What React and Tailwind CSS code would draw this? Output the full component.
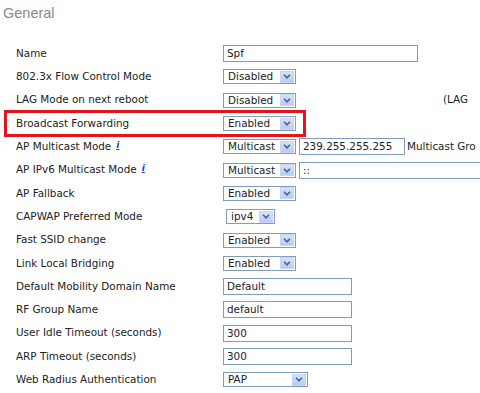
import React from "react";

function Arrow() {
  return (
    <span className="w-[14px] h-[12px] mr-[1px] shrink-0 flex items-center justify-center bg-[linear-gradient(#d6e2fc,#b8cbf6)] border border-[#c6d6fa]">
      <svg width="8" height="5" viewBox="0 0 8 5">
        <path d="M1 0.8 L4 3.8 L7 0.8" stroke="#4d6185" strokeWidth="1.6" fill="none" />
      </svg>
    </span>
  );
}

function Select({ value, className }) {
  return (
    <div className={"flex items-center h-[15px] border border-[#7f9db9] bg-white shrink-0 " + className}>
      <span className="pl-[4px] flex-1 leading-[13px] whitespace-nowrap">{value}</span>
      <Arrow />
    </div>
  );
}

function Input({ value, className }) {
  return (
    <div className={"flex items-center h-[17px] border border-[#7f9db9] bg-white shrink-0 " + className}>
      <span className="pl-[3px] leading-[13px] whitespace-nowrap">{value}</span>
    </div>
  );
}

function Info() {
  return (
    <span className="ml-[5px] inline-block text-[#1a33d6] font-bold italic underline text-[9px] leading-[10px] -translate-y-[2px]">i</span>
  );
}

export default function App() {
  const rows = [
    { label: "Name", ctrl: <Input value="Spf" className="w-[195px]" /> },
    { label: "802.3x Flow Control Mode", ctrl: <Select value="Disabled" className="w-[73px]" /> },
    {
      label: "LAG Mode on next reboot",
      ctrl: (
        <>
          <Select value="Disabled" className="w-[73px]" />
          <span className="ml-[147px] whitespace-nowrap">(LAG</span>
        </>
      ),
    },
    { label: "Broadcast Forwarding", ctrl: <Select value="Enabled" className="w-[73px]" />, hl: true },
    {
      label: "AP Multicast Mode",
      info: true,
      ctrl: (
        <>
          <Select value="Multicast" className="w-[73px]" />
          <Input value="239.255.255.255" className="w-[106px] ml-[3px]" />
          <span className="ml-[2px] whitespace-nowrap">Multicast Gro</span>
        </>
      ),
    },
    {
      label: "AP IPv6 Multicast Mode",
      info: true,
      ctrl: (
        <>
          <Select value="Multicast" className="w-[73px]" />
          <Input value="::" className="w-[260px] ml-[3px]" />
        </>
      ),
    },
    { label: "AP Fallback", ctrl: <Select value="Enabled" className="w-[73px]" /> },
    { label: "CAPWAP Preferred Mode", ctrl: <Select value="ipv4" className="w-[49px] ml-[3px]" /> },
    { label: "Fast SSID change", ctrl: <Select value="Enabled" className="w-[73px]" /> },
    { label: "Link Local Bridging", ctrl: <Select value="Enabled" className="w-[73px]" /> },
    { label: "Default Mobility Domain Name", ctrl: <Input value="Default" className="w-[129px]" /> },
    { label: "RF Group Name", ctrl: <Input value="default" className="w-[129px]" /> },
    { label: "User Idle Timeout (seconds)", ctrl: <Input value="300" className="w-[129px]" /> },
    { label: "ARP Timeout (seconds)", ctrl: <Input value="300" className="w-[129px]" /> },
    { label: "Web Radius Authentication", ctrl: <Select value="PAP" className="w-[85px]" /> },
  ];

  return (
    <div className="w-[480px] h-[393px] overflow-hidden bg-white relative font-['DejaVu_Sans',sans-serif] text-[10.4px] text-[#222]">
      <div className="pl-[3px] pt-[4px] h-[24px] font-['Liberation_Sans',Arial,sans-serif] text-[14.5px] leading-[18px] text-[#8a8a8a]">
        General
      </div>
      <div className="mt-[18px] flex flex-col">
        {rows.map((r, i) => (
          <div key={i} className="relative flex items-center h-[23.3px]">
            {r.hl && (
              <div className="absolute left-[4px] top-[-2px] w-[302px] h-[27px] border-[3px] border-[#e3141c] pointer-events-none" />
            )}
            <div className="w-[223px] shrink-0 pl-[16px] whitespace-nowrap flex items-center">
              <span>{r.label}</span>
              {r.info && <Info />}
            </div>
            <div className="flex items-center">{r.ctrl}</div>
          </div>
        ))}
      </div>
    </div>
  );
}
